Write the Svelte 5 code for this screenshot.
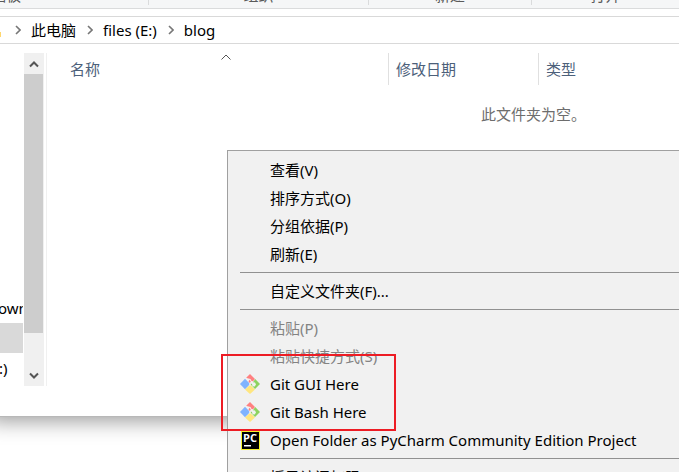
<script>
  const ribbon = ['剪贴板', '组织', '新建', '打开'];
  const path = ['此电脑', 'files (E:)', 'blog'];
  const groups = [
    [{ label: '查看(V)' }, { label: '排序方式(O)' }, { label: '分组依据(P)' }, { label: '刷新(E)' }],
    [{ label: '自定义文件夹(F)...' }],
    [
      { label: '粘贴(P)', disabled: true },
      { label: '粘贴快捷方式(S)', disabled: true },
      { label: 'Git GUI Here', icon: 'git' },
      { label: 'Git Bash Here', icon: 'git' },
      { label: 'Open Folder as PyCharm Community Edition Project', icon: 'pycharm' }
    ],
    [{ label: '授予访问权限(G)' }]
  ];
</script>

<main class="desktop">
  <section class="window">
    <div class="ribbon">
      {#each ribbon as name}
        <div class="group"><span>{name}</span></div>
      {/each}
    </div>
    <nav class="address">
      <span class="folder"></span>
      {#each path as part}
        <svg class="chevron" viewBox="0 0 6 10"><path d="M1 1l4 4-4 4" /></svg>
        <a href="#{part}">{part}</a>
      {/each}
    </nav>
    <div class="content">
      <aside class="tree">
        <div class="node">Downloads</div>
        <div class="node selected"></div>
        <div class="node drive">(C:)</div>
      </aside>
      <div class="scrollbar">
        <button aria-label="向上滚动"><svg viewBox="0 0 10 8"><path d="M1 6.500l4-4 4 4" /></svg></button>
        <div class="thumb"></div>
        <button aria-label="向下滚动"><svg viewBox="0 0 10 8"><path d="M1 1.500l4 4 4-4" /></svg></button>
      </div>
      <div class="files">
        <div class="columns">
          <button class="name">
            名称
            <svg class="sort" viewBox="0 0 10 6"><path d="M.5 5.500L5 1l4.500 4.500" /></svg>
          </button>
          <button>修改日期</button>
          <button>类型</button>
        </div>
        <p class="empty">此文件夹为空。</p>
      </div>
    </div>
  </section>

  <div class="menu" role="menu">
    {#each groups as items, i}
      {#if i > 0}<hr />{/if}
      {#each items as item}
        <button role="menuitem" disabled={item.disabled}>
          <span class="icon">
            {#if item.icon === 'git'}
              <svg viewBox="0 0 20 20">
                <path fill="#ff8080" d="M10 0l5 5-2 2.300-1.500-.3-1-2L7.500 4.200 6.200 3.800z" />
                <path fill="#ff8080" d="M9.300 5.800l1.500 1.500-.9 1.700-1.400-1.400z" />
                <path fill="#80b3ff" d="M5 4.800L9.200 9v2L5 15.200 0 10z" />
                <path fill="#8dd35f" d="M15.200 5L20 10l-5 5-4.200-4.200V9.500l1.200.5.500 2.200 2.200.3 1.300-2-1-2-2-.3z" />
                <path fill="#ffe680" d="M9.300 11.500h1.400L15 15.500 10 20l-5-4.500z" />
              </svg>
            {:else if item.icon === 'pycharm'}
              <svg viewBox="0 0 20 20">
                <path fill="#f5f02c" d="M1 1h19v19H1z" />
                <path fill="#000" d="M2 2h17v17H2z" />
                <text x="3" y="12" fill="#fff">PC</text>
                <path fill="#fff" d="M4 15h7v1.500H4z" />
              </svg>
            {/if}
          </span>
          {item.label}
        </button>
      {/each}
    {/each}
  </div>
  <div class="highlight"></div>
</main>

<style>
  :global(body) { margin: 0; background: #fff; }
  .desktop {
    position: relative;
    height: 100vh;
    overflow: hidden;
    font: 15px/20px "Noto Sans", "Noto Sans CJK SC", sans-serif;
    color: #000;
  }
  button {
    font: inherit;
    border: 0;
    padding: 0;
    background: none;
    color: inherit;
    text-align: left;
  }
  svg { display: block; fill: none; flex: none; }

  .window {
    background: #fff;
    border-bottom: 1px solid #b8b8b8;
    box-shadow: 0 -8px 20px 12px rgba(0, 0, 0, 0.4);
  }
  .ribbon {
    display: grid;
    grid-template-columns: 149px 220px 163px 1fr;
    height: 8px;
    background: #f5f6f7;
    border-bottom: 1px solid #dadbdc;
    color: #5a5a5a;
  }
  .group {
    display: flex;
    justify-content: center;
    align-items: flex-end;
    height: 5px;
    border-right: 1px solid #dadbdc;
  }
  .group:first-child { justify-content: flex-start; margin-left: -24px; }
  .group:last-child { border: 0; }

  .address {
    display: flex;
    align-items: center;
    gap: 11px;
    height: 26px;
    margin-top: 7px;
    border: solid #d9d9d9;
    border-width: 1px 0;
  }
  .folder { width: 1px; height: 5px; margin: 8px 3px 0 0; background: #ffd76e; }
  .chevron { width: 6px; height: 10px; stroke: #777; stroke-width: 1.6; margin-right: -1px; }
  a { color: #000; text-decoration: none; }

  .content { display: flex; height: 333px; padding: 9px 0 30px; }
  .tree {
    display: flex;
    flex-direction: column;
    justify-content: flex-end;
    width: 23px;
    margin-right: 1px;
    padding-bottom: 3px;
    overflow: hidden;
  }
  .node { height: 30px; line-height: 30px; margin-left: -13px; }
  .drive { margin-left: -15px; }
  .selected { background: #d9d9d9; }
  .scrollbar {
    display: flex;
    flex-direction: column;
    width: 20px;
    margin-right: 2px;
    background: #f0f0f0;
  }
  .scrollbar button { display: grid; place-items: center; height: 21px; }
  .scrollbar svg { width: 10px; height: 8px; stroke: #555; stroke-width: 2; }
  .thumb { height: 259px; margin: 0 1px 32px 0; background: #cdcdcd; }
  .files { flex: 1; padding-left: 16px; border-left: 1px solid #f0f0f0; }
  .columns { display: grid; grid-template-columns: 326px 150px 1fr; height: 32px; color: #4c607a; }
  .columns button { padding-left: 7px; border-right: 1px solid #e0e0e0; }
  .columns button:last-child { border: 0; }
  .columns .name { position: relative; }
  .sort { position: absolute; top: 1px; left: calc(50% - 5px); width: 10px; height: 6px; stroke: #555; }
  .empty { margin: 19px 0 0; padding-right: 93px; text-align: right; color: #6d6d6d; }

  .menu {
    position: absolute;
    top: 150px;
    left: 227px;
    right: -13px;
    padding: 5px 12px;
    border: 1px solid #a0a0a0;
    background: #f1f1f1;
  }
  .menu button { display: flex; align-items: center; gap: 10px; width: 100%; height: 28px; }
  .menu button:disabled { color: #838383; }
  .icon { width: 20px; height: 20px; flex: none; }
  .icon svg { width: 20px; height: 20px; }
  .icon text { font: bold 11px "Open Sans", sans-serif; }
  hr { height: 1px; margin: 4px 0; border: 0; background: #919191; }
  .highlight {
    position: absolute;
    top: 354px;
    left: 221px;
    width: 171px;
    height: 73px;
    border: 2px solid #ed1c24;
  }
</style>
